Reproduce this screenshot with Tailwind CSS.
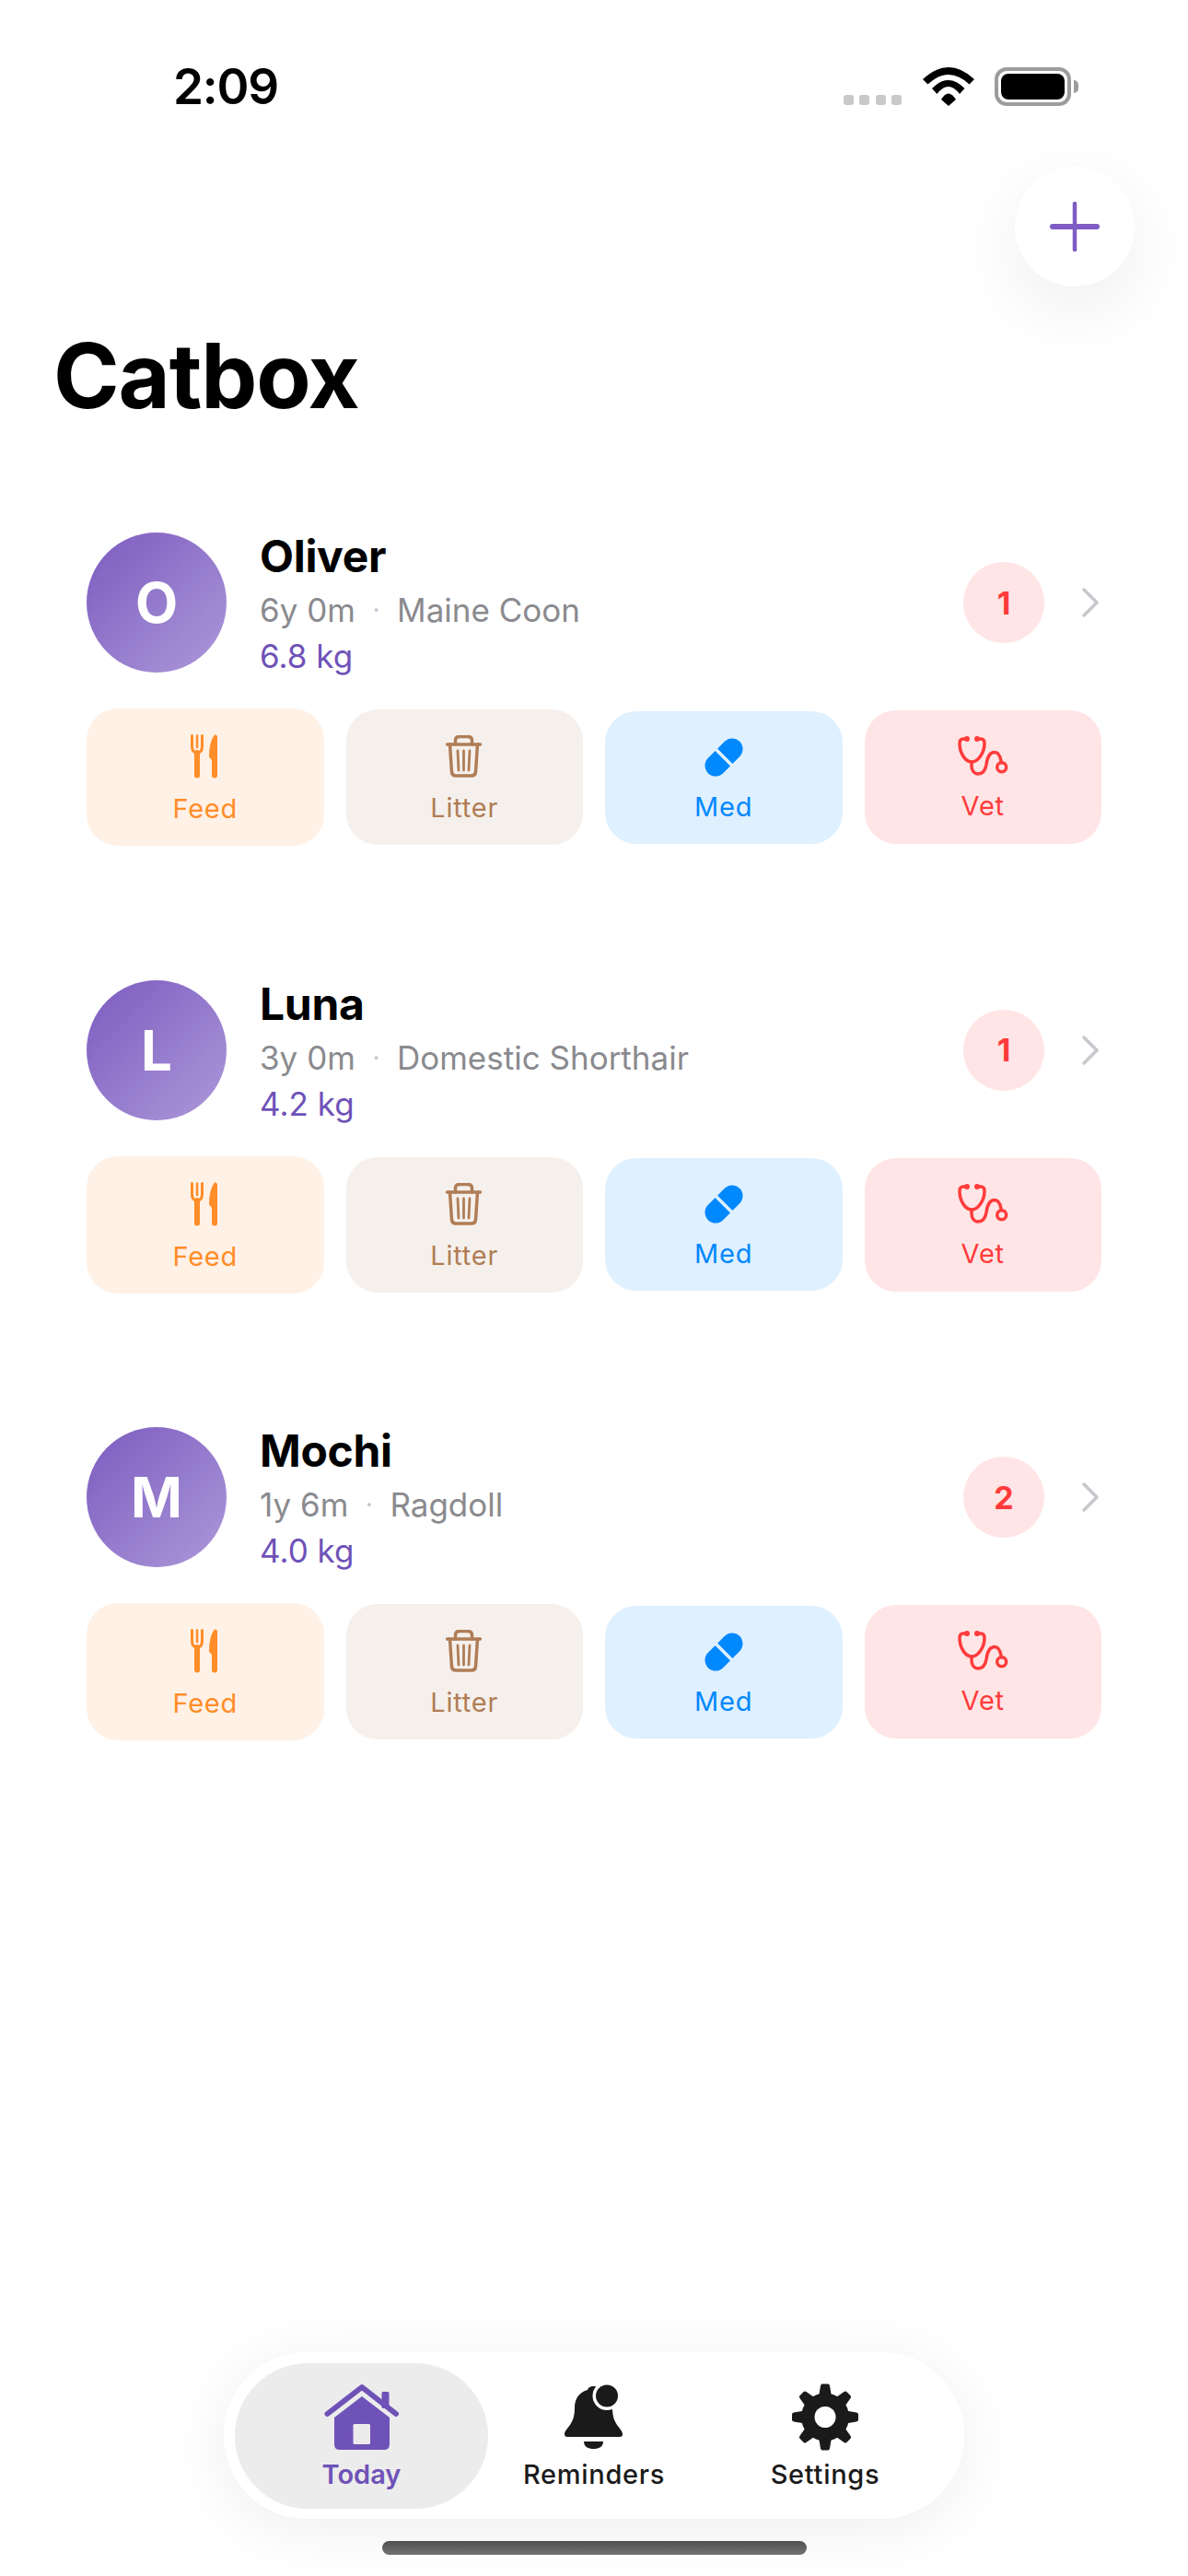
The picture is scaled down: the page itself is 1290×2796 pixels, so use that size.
<!DOCTYPE html>
<html lang="en">

<head>
    <meta charset="UTF-8">
    <meta name="viewport" content="width=device-width, initial-scale=1.0">
    <script src="https://cdn.jsdelivr.net/npm/@tailwindcss/browser@4"></script>
    <title>Catbox</title>
</head>

<body class="bg-white">
    <div class="w-[1290px] h-[2796px] overflow-hidden flex flex-col bg-white font-['Inter',sans-serif] text-black">

        <!-- status bar -->
        <div class="flex items-start h-[181px] pt-[73px] pl-[188px] pr-[119px]">
            <span class="text-[53px] leading-[42px] font-semibold tracking-[-1.2px]">2:09</span>
            <div class="ml-auto flex items-start">
                <div class="flex gap-[6.5px] mt-[30px]">
                    <span class="w-[11px] h-[11px] rounded-[3px] bg-[#c9c9c9]"></span>
                    <span class="w-[11px] h-[11px] rounded-[3px] bg-[#c9c9c9]"></span>
                    <span class="w-[11px] h-[11px] rounded-[3px] bg-[#c9c9c9]"></span>
                    <span class="w-[11px] h-[11px] rounded-[3px] bg-[#c9c9c9]"></span>
                </div>
                <svg class="ml-[23px]" width="56" height="42" viewBox="0 0 56 42" fill="#000">
                    <path d="M0 13Q28-13 56 13L50.5 18.500Q28-2.500 5.500 18.500Z" />
                    <path d="M10 23Q27.750 5 45.500 23L40 29Q27.750 13 15.500 29Z" />
                    <path d="M20 35Q27.750 22 36 35L28 42Z" />
                </svg>
                <div class="ml-[22px] w-[83px] h-[42px] rounded-[13px] border-[4px] border-[#9c9c9c] p-[3px]">
                    <div class="w-full h-full rounded-[8px] bg-black"></div>
                </div>
                <div class="ml-[3px] mt-[14px] w-[5px] h-[14px] rounded-r-full bg-[#9c9c9c]"></div>
            </div>
        </div>

        <!-- add button -->
        <div class="flex justify-end pr-[58px]">
            <button class="w-[130px] h-[130px] rounded-full bg-white shadow-[0_24px_80px_rgba(0,0,0,0.07)] flex items-center justify-center">
                <svg width="54" height="54" viewBox="0 0 54 54" stroke="#7e5cc4" stroke-linecap="round">
                    <path d="M3 27H51" stroke-width="6" />
                    <path d="M27 2V52" stroke-width="4.500" />
                </svg>
            </button>
        </div>

        <h1 class="mt-[39px] ml-[58px] text-[97px] leading-[116px] font-bold tracking-[-1.2px]">Catbox</h1>

        <!-- cats -->
        <div class="mt-[112px] px-[94px] flex flex-col gap-[145.500px]">

            <div>
                <div class="flex items-start">
                    <div class="w-[152px] h-[152px] shrink-0 rounded-full bg-linear-to-br from-[#7c5bbf] to-[#ae98d9] flex items-center justify-center text-white text-[60px] font-bold">O</div>
                    <div class="ml-[36px] -mt-[2px] flex flex-col items-start">
                        <span class="text-[48px] leading-[56px] font-bold tracking-[-0.3px]">Oliver</span>
                        <div class="mt-[5px] flex items-center gap-[18.500px] text-[35px] leading-[50px] text-[#8a8a8e]">
                            <span>6y 0m</span><span class="text-[#c7c7cc] text-[28px]">·</span><span>Maine Coon</span>
                        </div>
                        <span class="text-[35px] leading-[50px] text-[#6f52b8]">6.8 kg</span>
                    </div>
                    <div class="ml-auto mt-[32px] w-[88px] h-[88px] rounded-full bg-[#ffe5e5] flex items-center justify-center text-[#ff3b3b] text-[34px] font-bold">1</div>
                    <svg class="ml-[41px] mt-[60px] mr-[3px]" width="18" height="32" viewBox="0 0 18 32" fill="none" stroke="#c7c7cc" stroke-width="3.500" stroke-linecap="round" stroke-linejoin="round"><path d="M2 2L16 16L2 30" /></svg>
                </div>
                <div class="mt-[32px] grid grid-cols-4 gap-[24px] items-center h-[149px]">
                    <button class="h-[149px] rounded-[34px] bg-[#fff1e6] flex flex-col items-center text-[#ff8d28] text-[29px] leading-[36px] tracking-[0.8px] pt-[28px]">
                        <svg width="32" height="48" viewBox="0 0 32 48" fill="none" stroke="#ff8d28"><path d="M1.500 1.500V13Q1.500 20 7 20Q12.500 20 12.500 13V1.500" stroke-width="3" stroke-linecap="round" /><path d="M7 1.500V14" stroke-width="2.500" stroke-linecap="round" /><path d="M7 20V44.500" stroke-width="6" stroke-linecap="round" /><path d="M26 .5Q29 0 29 3V44.500a3 3 0 0 1-6 0V28L20 24.500Q20 8 26 .5Z" fill="#ff8d28" stroke="none" /></svg>
                        <span class="mt-[15px]">Feed</span>
                    </button>
                    <button class="h-[147px] rounded-[34px] bg-[#f5f0ec] flex flex-col items-center text-[#b07d56] text-[29px] leading-[36px] tracking-[0.8px] pt-[28px]">
                        <svg width="40" height="46" viewBox="0 0 40 46" fill="none" stroke="#b07d56" stroke-width="3.500" stroke-linecap="round" stroke-linejoin="round"><path d="M1.500 10H37.500" /><path d="M10.500 10V6Q10.500 1.500 15 1.500H24Q28.500 1.500 28.500 6V10" /><path d="M4.500 10L6.500 40Q7 44 11 44H28Q32 44 32.500 40L34.500 10" /><path d="M13 17L14 38M19.500 17V38M26 17L25 38" stroke-width="2.800" /></svg>
                        <span class="mt-[15px]">Litter</span>
                    </button>
                    <button class="h-[144px] rounded-[34px] bg-[#dff0ff] flex flex-col items-center text-[#0088ff] text-[29px] leading-[36px] tracking-[0.8px] pt-[29px]">
                        <svg width="42" height="42" viewBox="0 0 42 42" fill="none"><path d="M12 30L30 12" stroke="#0088ff" stroke-width="23" stroke-linecap="round" /><path d="M12 12L30 30" stroke="#dff0ff" stroke-width="3.500" /></svg>
                        <span class="mt-[15px]">Med</span>
                    </button>
                    <button class="h-[145px] rounded-[34px] bg-[#ffe5e5] flex flex-col items-center text-[#ff3b3b] text-[29px] leading-[36px] tracking-[0.8px] pt-[27px]">
                        <svg class="ml-[2px]" width="58" height="46" viewBox="0 0 58 46" fill="none" stroke="#ff3b3b" stroke-width="3.500" stroke-linecap="round"><path d="M11 4H7C4 4 3 6 3 9C3 19 9 29 16 29C23 29 30 19 30 9C30 6 29 4 26 4H22" /><path d="M16 29V33C16 39 19 42 23 42C28 42 31 38 32 32C33 24 36 18.500 41 18.500C45 18.500 47 22 48 28" /><circle cx="48.700" cy="34.700" r="5" /><circle cx="11" cy="4" r="3" fill="#ff3b3b" stroke="none" /><circle cx="22" cy="4" r="3" fill="#ff3b3b" stroke="none" /></svg>
                        <span class="mt-[13px]">Vet</span>
                    </button>
                </div>
            </div>

            <div>
                <div class="flex items-start">
                    <div class="w-[152px] h-[152px] shrink-0 rounded-full bg-linear-to-br from-[#7c5bbf] to-[#ae98d9] flex items-center justify-center text-white text-[60px] font-bold">L</div>
                    <div class="ml-[36px] -mt-[2px] flex flex-col items-start">
                        <span class="text-[48px] leading-[56px] font-bold tracking-[-0.3px]">Luna</span>
                        <div class="mt-[5px] flex items-center gap-[18.500px] text-[35px] leading-[50px] text-[#8a8a8e]">
                            <span>3y 0m</span><span class="text-[#c7c7cc] text-[28px]">·</span><span>Domestic Shorthair</span>
                        </div>
                        <span class="text-[35px] leading-[50px] text-[#6f52b8]">4.2 kg</span>
                    </div>
                    <div class="ml-auto mt-[32px] w-[88px] h-[88px] rounded-full bg-[#ffe5e5] flex items-center justify-center text-[#ff3b3b] text-[34px] font-bold">1</div>
                    <svg class="ml-[41px] mt-[60px] mr-[3px]" width="18" height="32" viewBox="0 0 18 32" fill="none" stroke="#c7c7cc" stroke-width="3.500" stroke-linecap="round" stroke-linejoin="round"><path d="M2 2L16 16L2 30" /></svg>
                </div>
                <div class="mt-[32px] grid grid-cols-4 gap-[24px] items-center h-[149px]">
                    <button class="h-[149px] rounded-[34px] bg-[#fff1e6] flex flex-col items-center text-[#ff8d28] text-[29px] leading-[36px] tracking-[0.8px] pt-[28px]">
                        <svg width="32" height="48" viewBox="0 0 32 48" fill="none" stroke="#ff8d28"><path d="M1.500 1.500V13Q1.500 20 7 20Q12.500 20 12.500 13V1.500" stroke-width="3" stroke-linecap="round" /><path d="M7 1.500V14" stroke-width="2.500" stroke-linecap="round" /><path d="M7 20V44.500" stroke-width="6" stroke-linecap="round" /><path d="M26 .5Q29 0 29 3V44.500a3 3 0 0 1-6 0V28L20 24.500Q20 8 26 .5Z" fill="#ff8d28" stroke="none" /></svg>
                        <span class="mt-[15px]">Feed</span>
                    </button>
                    <button class="h-[147px] rounded-[34px] bg-[#f5f0ec] flex flex-col items-center text-[#b07d56] text-[29px] leading-[36px] tracking-[0.8px] pt-[28px]">
                        <svg width="40" height="46" viewBox="0 0 40 46" fill="none" stroke="#b07d56" stroke-width="3.500" stroke-linecap="round" stroke-linejoin="round"><path d="M1.500 10H37.500" /><path d="M10.500 10V6Q10.500 1.500 15 1.500H24Q28.500 1.500 28.500 6V10" /><path d="M4.500 10L6.500 40Q7 44 11 44H28Q32 44 32.500 40L34.500 10" /><path d="M13 17L14 38M19.500 17V38M26 17L25 38" stroke-width="2.800" /></svg>
                        <span class="mt-[15px]">Litter</span>
                    </button>
                    <button class="h-[144px] rounded-[34px] bg-[#dff0ff] flex flex-col items-center text-[#0088ff] text-[29px] leading-[36px] tracking-[0.8px] pt-[29px]">
                        <svg width="42" height="42" viewBox="0 0 42 42" fill="none"><path d="M12 30L30 12" stroke="#0088ff" stroke-width="23" stroke-linecap="round" /><path d="M12 12L30 30" stroke="#dff0ff" stroke-width="3.500" /></svg>
                        <span class="mt-[15px]">Med</span>
                    </button>
                    <button class="h-[145px] rounded-[34px] bg-[#ffe5e5] flex flex-col items-center text-[#ff3b3b] text-[29px] leading-[36px] tracking-[0.8px] pt-[27px]">
                        <svg class="ml-[2px]" width="58" height="46" viewBox="0 0 58 46" fill="none" stroke="#ff3b3b" stroke-width="3.500" stroke-linecap="round"><path d="M11 4H7C4 4 3 6 3 9C3 19 9 29 16 29C23 29 30 19 30 9C30 6 29 4 26 4H22" /><path d="M16 29V33C16 39 19 42 23 42C28 42 31 38 32 32C33 24 36 18.500 41 18.500C45 18.500 47 22 48 28" /><circle cx="48.700" cy="34.700" r="5" /><circle cx="11" cy="4" r="3" fill="#ff3b3b" stroke="none" /><circle cx="22" cy="4" r="3" fill="#ff3b3b" stroke="none" /></svg>
                        <span class="mt-[13px]">Vet</span>
                    </button>
                </div>
            </div>

            <div>
                <div class="flex items-start">
                    <div class="w-[152px] h-[152px] shrink-0 rounded-full bg-linear-to-br from-[#7c5bbf] to-[#ae98d9] flex items-center justify-center text-white text-[60px] font-bold">M</div>
                    <div class="ml-[36px] -mt-[2px] flex flex-col items-start">
                        <span class="text-[48px] leading-[56px] font-bold tracking-[-0.3px]">Mochi</span>
                        <div class="mt-[5px] flex items-center gap-[18.500px] text-[35px] leading-[50px] text-[#8a8a8e]">
                            <span>1y 6m</span><span class="text-[#c7c7cc] text-[28px]">·</span><span>Ragdoll</span>
                        </div>
                        <span class="text-[35px] leading-[50px] text-[#6f52b8]">4.0 kg</span>
                    </div>
                    <div class="ml-auto mt-[32px] w-[88px] h-[88px] rounded-full bg-[#ffe5e5] flex items-center justify-center text-[#ff3b3b] text-[34px] font-bold">2</div>
                    <svg class="ml-[41px] mt-[60px] mr-[3px]" width="18" height="32" viewBox="0 0 18 32" fill="none" stroke="#c7c7cc" stroke-width="3.500" stroke-linecap="round" stroke-linejoin="round"><path d="M2 2L16 16L2 30" /></svg>
                </div>
                <div class="mt-[32px] grid grid-cols-4 gap-[24px] items-center h-[149px]">
                    <button class="h-[149px] rounded-[34px] bg-[#fff1e6] flex flex-col items-center text-[#ff8d28] text-[29px] leading-[36px] tracking-[0.8px] pt-[28px]">
                        <svg width="32" height="48" viewBox="0 0 32 48" fill="none" stroke="#ff8d28"><path d="M1.500 1.500V13Q1.500 20 7 20Q12.500 20 12.500 13V1.500" stroke-width="3" stroke-linecap="round" /><path d="M7 1.500V14" stroke-width="2.500" stroke-linecap="round" /><path d="M7 20V44.500" stroke-width="6" stroke-linecap="round" /><path d="M26 .5Q29 0 29 3V44.500a3 3 0 0 1-6 0V28L20 24.500Q20 8 26 .5Z" fill="#ff8d28" stroke="none" /></svg>
                        <span class="mt-[15px]">Feed</span>
                    </button>
                    <button class="h-[147px] rounded-[34px] bg-[#f5f0ec] flex flex-col items-center text-[#b07d56] text-[29px] leading-[36px] tracking-[0.8px] pt-[28px]">
                        <svg width="40" height="46" viewBox="0 0 40 46" fill="none" stroke="#b07d56" stroke-width="3.500" stroke-linecap="round" stroke-linejoin="round"><path d="M1.500 10H37.500" /><path d="M10.500 10V6Q10.500 1.500 15 1.500H24Q28.500 1.500 28.500 6V10" /><path d="M4.500 10L6.500 40Q7 44 11 44H28Q32 44 32.500 40L34.500 10" /><path d="M13 17L14 38M19.500 17V38M26 17L25 38" stroke-width="2.800" /></svg>
                        <span class="mt-[15px]">Litter</span>
                    </button>
                    <button class="h-[144px] rounded-[34px] bg-[#dff0ff] flex flex-col items-center text-[#0088ff] text-[29px] leading-[36px] tracking-[0.8px] pt-[29px]">
                        <svg width="42" height="42" viewBox="0 0 42 42" fill="none"><path d="M12 30L30 12" stroke="#0088ff" stroke-width="23" stroke-linecap="round" /><path d="M12 12L30 30" stroke="#dff0ff" stroke-width="3.500" /></svg>
                        <span class="mt-[15px]">Med</span>
                    </button>
                    <button class="h-[145px] rounded-[34px] bg-[#ffe5e5] flex flex-col items-center text-[#ff3b3b] text-[29px] leading-[36px] tracking-[0.8px] pt-[27px]">
                        <svg class="ml-[2px]" width="58" height="46" viewBox="0 0 58 46" fill="none" stroke="#ff3b3b" stroke-width="3.500" stroke-linecap="round"><path d="M11 4H7C4 4 3 6 3 9C3 19 9 29 16 29C23 29 30 19 30 9C30 6 29 4 26 4H22" /><path d="M16 29V33C16 39 19 42 23 42C28 42 31 38 32 32C33 24 36 18.500 41 18.500C45 18.500 47 22 48 28" /><circle cx="48.700" cy="34.700" r="5" /><circle cx="11" cy="4" r="3" fill="#ff3b3b" stroke="none" /><circle cx="22" cy="4" r="3" fill="#ff3b3b" stroke="none" /></svg>
                        <span class="mt-[13px]">Vet</span>
                    </button>
                </div>
            </div>
        </div>

        <!-- tab bar -->
        <div class="mt-auto flex flex-col items-center">
            <div class="w-[804px] h-[181px] rounded-[90px] bg-white shadow-[0_10px_70px_rgba(0,0,0,0.07)] p-[12px] flex items-start text-[29px] leading-[36px] font-medium tracking-[0.7px] text-[#1a1a1a]">
                <div class="w-[275px] h-[158px] rounded-[79px] bg-[#ececec] flex flex-col items-center pt-[22px] text-[#6f52b8] font-semibold tracking-normal">
                    <svg width="82" height="73" viewBox="0 0 82 73"><rect x="62.500" y="9" width="8" height="18" rx="1.500" fill="#6f52b8" /><path d="M3.500 33L41 4L78 33" fill="none" stroke="#6f52b8" stroke-width="6" stroke-linecap="round" stroke-linejoin="round" /><path d="M41 14L11 37V66Q11 72 17 72H65Q71 72 71 66V37Z" fill="#6f52b8" /><rect x="31.500" y="44" width="18.500" height="22" rx="1.500" fill="#ececec" /></svg>
                    <span class="mt-[8px]">Today</span>
                </div>
                <div class="w-[152px] ml-[39px] flex flex-col items-center pt-[22px]">
                    <svg width="68" height="73" viewBox="0 0 68 73" fill="#1a1a1a"><path d="M33.500 3C30 3 28 4 27 7C19 9 13 16 13 26C13 36 11 40 8 45C5 49 2 52 2 55C2 57 3 58 5 58H62C64 58 65 57 65 55C65 52 62 49 59 45C56 40 54 36 54 26C54 16 48 9 40 7C39 4 37 3 33.500 3Z" /><path d="M23 63H44C44 69 39 71 33.500 71C28 71 23 69 23 63Z" /><circle cx="48" cy="13.500" r="15.500" fill="#fff" /><circle cx="48" cy="13.500" r="12" /></svg>
                    <span class="mt-[8px]">Reminders</span>
                </div>
                <div class="w-[120px] ml-[115px] flex flex-col items-center pt-[22px]">
                    <svg width="72" height="73" viewBox="0 0 72 72" fill="#1a1a1a"><path d="M29 14L31 2Q31.500 0 33 0H39Q40.500 0 41 2L43 14Z" /><path d="M29 14L31 2Q31.500 0 33 0H39Q40.500 0 41 2L43 14Z" transform="rotate(45 36 36)" /><path d="M29 14L31 2Q31.500 0 33 0H39Q40.500 0 41 2L43 14Z" transform="rotate(90 36 36)" /><path d="M29 14L31 2Q31.500 0 33 0H39Q40.500 0 41 2L43 14Z" transform="rotate(135 36 36)" /><path d="M29 14L31 2Q31.500 0 33 0H39Q40.500 0 41 2L43 14Z" transform="rotate(180 36 36)" /><path d="M29 14L31 2Q31.500 0 33 0H39Q40.500 0 41 2L43 14Z" transform="rotate(225 36 36)" /><path d="M29 14L31 2Q31.500 0 33 0H39Q40.500 0 41 2L43 14Z" transform="rotate(270 36 36)" /><path d="M29 14L31 2Q31.500 0 33 0H39Q40.500 0 41 2L43 14Z" transform="rotate(315 36 36)" /><circle cx="36" cy="36" r="26" /><circle cx="36" cy="36" r="11.500" fill="#fff" /></svg>
                    <span class="mt-[8px]">Settings</span>
                </div>
            </div>
            <div class="mt-[24px] mb-[23px] w-[461px] h-[15px] rounded-full bg-linear-to-b from-[#4f4f4f] to-[#737373]"></div>
        </div>
    </div>
</body>

</html>
